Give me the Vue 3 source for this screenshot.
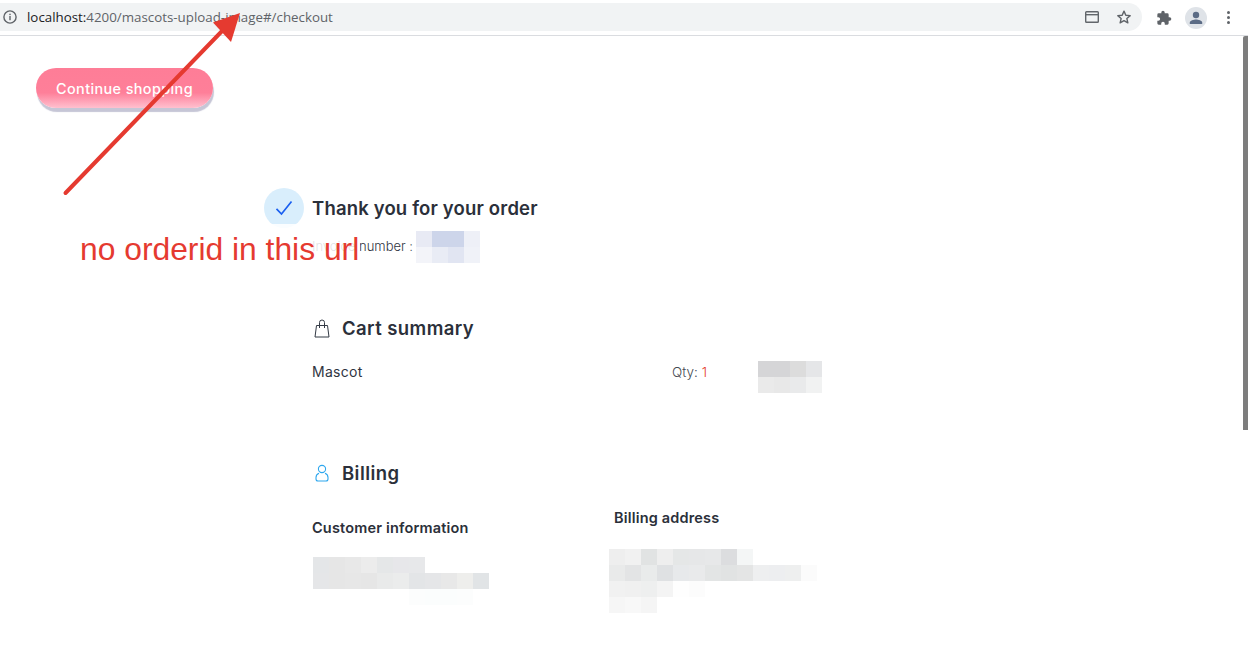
<script setup>
const orderCells = [
  ['#e8eaf4', '#cdd5ea', '#cdd5ea', '#eef0f7'],
  ['#f3f4f9', '#e9ecf5', '#e1e5f2', '#f0f2f8'],
]
const priceCells = [
  ['#d5d5d7', '#d5d5d7', '#dcdcdc', '#e5e6e8'],
  ['#eaeaea', '#e8e8e8', '#e9eaeb', '#f1f2f2'],
]
const customerCells = [
  ['#e4e6e8', '#e6e6e6', '#e8e8e8', '#ececec', '#e5e7e8', '#e7e7ea', '#e7e8ea'],
  ['#e5e6e8', '#e6e6e6', '#e7e7e7', '#e6e6e6', '#e9eaea', '#ebecec', '#e3e5e7', '#e5e6e8', '#e8e8e8', '#eeeeec', '#e1e4e6'],
  ['#fff', '#fff', '#fff', '#fff', '#fff', '#fff', '#fcfdfd', '#fbfdfd', '#fbfdfd', '#fcfdfd'],
]
const addressCells = [
  ['#eeeeee', '#f1f1f1', '#e1e3e3', '#eeeeee', '#e5e7e7', '#e6e7e8', '#e7e8e9', '#dcdddf', '#f4f6f6'],
  ['#e9eaea', '#e3e4e5', '#e9ebeb', '#dfe1e3', '#e7e9eb', '#e9eaeb', '#e3e5e5', '#e1e3e3', '#e4e5e5', '#eeeff0', '#edeef0', '#eeefef', '#fbfbfb'],
  ['#f1f1f1', '#f0f0f0', '#eeefef', '#f4f4f4', '#fefefe', '#fcfcfc'],
  ['#f6f6f6', '#f8f8f8', '#f5f5f5'],
]
</script>

<template>
  <div class="screen">
    <header class="toolbar">
      <div class="omnibox">
        <svg class="info" width="14" height="14" viewBox="0 0 14 14" fill="none">
          <circle cx="7" cy="7" r="6.1" stroke="#5f6368" stroke-width="1.4" />
          <rect x="6.3" y="6" width="1.4" height="4.2" fill="#5f6368" />
          <rect x="6.3" y="3.7" width="1.4" height="1.4" fill="#5f6368" />
        </svg>
        <span class="url"><span class="host">localhost:</span>4200/mascots-upload-image#/checkout</span>
        <span class="spacer"></span>
        <svg class="omni-icon" width="16" height="14" viewBox="0 0 16 14" fill="none">
          <rect x="1.700" y="1.700" width="12.600" height="10.600" rx="0.800" stroke="#62666b" stroke-width="1.400" />
          <rect x="1.700" y="4" width="12.600" height="1.400" fill="#62666b" />
        </svg>
        <svg class="omni-icon star" width="16" height="16" viewBox="0 0 24 24" fill="none">
          <path d="M12 3.200l2.700 6.100 6.600.6-5 4.400 1.500 6.500L12 17.400l-5.800 3.400 1.500-6.500-5-4.400 6.600-.6z" stroke="#5f6368" stroke-width="2.100" stroke-linejoin="round" />
        </svg>
      </div>
      <div class="actions">
        <svg width="16" height="16" viewBox="0 0 24 24">
          <path d="M20.500 11H19V7a2 2 0 0 0-2-2h-4V3.500a2.500 2.500 0 0 0-5 0V5H4a2 2 0 0 0-2 2v3.800h1.500a2.700 2.700 0 0 1 0 5.400H2V20a2 2 0 0 0 2 2h3.800v-1.500a2.700 2.700 0 0 1 5.400 0V22H17a2 2 0 0 0 2-2v-4h1.500a2.500 2.500 0 0 0 0-5z" fill="#5f6368" />
        </svg>
        <span class="avatar">
          <svg width="16" height="16" viewBox="0 0 16 16">
            <circle cx="8" cy="5" r="3.200" fill="#5b6b85" />
            <path d="M1.800 14v-1.600C1.800 10.300 5.800 9.400 8 9.400s6.200.9 6.200 3V14z" fill="#5b6b85" />
          </svg>
        </span>
        <span class="kebab"><i></i><i></i><i></i></span>
      </div>
    </header>

    <div class="viewport">
      <main class="page">
        <button class="continue">Continue shopping</button>

        <section class="thanks">
          <div class="thanks-head">
            <span class="check-circle">
              <svg width="18" height="16" viewBox="0 0 18 16" fill="none">
                <path d="M1.500 8.800l5 5.200L16.500 1.500" stroke="#1a5ff0" stroke-width="1.700" />
              </svg>
            </span>
            <h1 class="thanks-title">Thank you for your order</h1>
          </div>
          <div class="order-line">
            <span class="order-label">Invoice number :</span>
            <div class="pixels order-pixels">
              <div v-for="(row, r) in orderCells" :key="r" class="pixel-row">
                <span v-for="(c, i) in row" :key="i" class="pixel" :style="{ background: c }"></span>
              </div>
            </div>
          </div>
        </section>

        <section class="cart">
          <h2 class="section-title">
            <svg class="section-icon" width="16" height="19" viewBox="0 0 16 19" fill="none">
              <path d="M2.500 6.500h11l1.500 11.500H1z" stroke="#333a45" stroke-width="1" stroke-linejoin="round" />
              <path d="M5.500 9V3.500a2.500 2.500 0 0 1 5 0V9" stroke="#333a45" stroke-width="1" />
            </svg>
            Cart summary
          </h2>
          <div class="cart-row">
            <span class="item-name">Mascot</span>
            <span class="qty">Qty: <b>1</b></span>
            <div class="pixels price-pixels">
              <div v-for="(row, r) in priceCells" :key="r" class="pixel-row">
                <span v-for="(c, i) in row" :key="i" class="pixel" :style="{ background: c }"></span>
              </div>
            </div>
          </div>
        </section>

        <section class="billing">
          <h2 class="section-title">
            <svg class="section-icon" width="16" height="18" viewBox="0 0 16 18" fill="none">
              <circle cx="8" cy="5" r="3.600" stroke="#2ea7ee" stroke-width="1.100" />
              <path d="M5 9.200C3 10 2 11.500 2 13.500V15c0 1.200.8 2 2 2h8c1.200 0 2-.8 2-2v-1.500c0-2-1-3.500-3-4.300" stroke="#2ea7ee" stroke-width="1.100" />
            </svg>
            Billing
          </h2>
          <div class="billing-cols">
            <div class="customer">
              <h3 class="sub-title">Customer information</h3>
              <div class="pixels customer-pixels">
                <div v-for="(row, r) in customerCells" :key="r" class="pixel-row">
                  <span v-for="(c, i) in row" :key="i" class="pixel" :style="{ background: c }"></span>
                </div>
              </div>
            </div>
            <div class="address">
              <h3 class="sub-title">Billing address</h3>
              <div class="pixels address-pixels">
                <div v-for="(row, r) in addressCells" :key="r" class="pixel-row">
                  <span v-for="(c, i) in row" :key="i" class="pixel" :style="{ background: c }"></span>
                </div>
              </div>
            </div>
          </div>
        </section>
      </main>
      <div class="scrollbar"><div class="thumb"></div></div>
    </div>

    <!-- Annotation layer drawn over the screenshot -->
    <div class="note">no orderid in this url</div>
    <svg class="arrow" width="1248" height="650" viewBox="0 0 1248 650" fill="none">
      <path d="M65.500 193L224 29" stroke="#e53a30" stroke-width="4" stroke-linecap="round" />
      <path d="M240 13L213 22.500 231 42z" fill="#e53a30" />
    </svg>
  </div>
</template>

<style scoped>
.screen {
  position: relative;
  width: 1248px;
  height: 650px;
  overflow: hidden;
  background: #fff;
  font-family: Inter, "Open Sans", sans-serif;
  color: #2b303a;
}
.toolbar {
  height: 35px;
  border-bottom: 1px solid #dadce0;
  display: flex;
  align-items: center;
  background: #fff;
}
.omnibox {
  width: 1142px;
  height: 28px;
  margin-top: -1px;
  background: #f1f3f4;
  border-radius: 0 14px 14px 0;
  display: flex;
  align-items: center;
  padding-left: 3px;
  box-sizing: border-box;
}
.info { flex: none; }
.url {
  margin-left: 10px;
  font: 13.330px "Open Sans", sans-serif;
  color: #5f6368;
  white-space: nowrap;
}
.host { color: #202124; }
.spacer { flex: 1; }
.omni-icon { flex: none; margin-right: 10px; }
.star { margin-left: 6px; }
.actions {
  flex: 1;
  display: flex;
  align-items: center;
  padding-left: 14px;
}
.avatar {
  width: 22px;
  height: 22px;
  border-radius: 50%;
  background: #dfe3e8;
  margin-left: 13px;
  display: flex;
  align-items: center;
  justify-content: center;
}
.kebab {
  display: flex;
  flex-direction: column;
  gap: 2px;
  margin-left: 20px;
}
.kebab i {
  width: 3px;
  height: 3px;
  border-radius: 50%;
  background: #5f6368;
}
.viewport {
  display: flex;
  height: 614px;
}
.page {
  flex: 1;
  min-width: 0;
}
.scrollbar {
  width: 5px;
  flex: none;
}
.thumb {
  height: 394px;
  background: #7d7d7d;
  border-top-left-radius: 2px;
}
.continue {
  display: block;
  width: 177px;
  height: 40px;
  margin: 32px 0 0 36px;
  border: 0;
  padding: 0;
  border-radius: 20px;
  background: linear-gradient(#fe7d97 0%, #fe7f99 62%, #ffc0cf 100%);
  box-shadow: 1px 4px 1px #c6c6d6;
  color: #fff;
  font: 500 14.400px Inter, sans-serif;
  letter-spacing: 0.400px;
}
.thanks {
  margin: 80px 0 0 264px;
}
.thanks-head {
  display: flex;
  align-items: center;
  gap: 8px;
}
.check-circle {
  width: 40px;
  height: 40px;
  border-radius: 50%;
  background: #d9eefc;
  display: flex;
  align-items: center;
  justify-content: center;
}
.thanks-title {
  margin: 0;
  font: 600 18.500px Inter, sans-serif;
  letter-spacing: 0.170px;
  color: #2b303a;
}
.order-line {
  display: flex;
  align-items: flex-start;
  margin: 3px 0 0 48px;
}
.order-label {
  width: 104px;
  font: 300 13px/30px Inter, sans-serif;
  color: #30353f;
  white-space: nowrap;
}
.pixels {
  display: flex;
  flex-direction: column;
}
.pixel-row {
  display: flex;
}
.pixel {
  width: 16px;
  height: 16px;
  flex: none;
}
.cart {
  margin: 53px 0 0 312px;
}
.section-title {
  margin: 0;
  display: flex;
  align-items: center;
  font: 600 18.500px/24px Inter, sans-serif;
  letter-spacing: 0.420px;
  color: #2b303a;
}
.section-icon {
  flex: none;
  margin: 0 12px 0 2px;
}
.cart-row {
  position: relative;
  display: flex;
  align-items: flex-start;
  margin-top: 21px;
}
.item-name {
  width: 360px;
  font: 400 14px/22px Inter, sans-serif;
  letter-spacing: 0.300px;
  color: #30353f;
}
.qty {
  width: 86px;
  font: 300 13.500px/22px Inter, sans-serif;
  color: #464a52;
}
.qty b {
  font-weight: 300;
  color: #e5402d;
}
.price-pixels {
  margin-top: 0;
}
.billing {
  margin: 68px 0 0 312px;
}
.billing-cols {
  display: flex;
  align-items: flex-start;
  margin-top: 22px;
}
.customer {
  width: 302px;
}
.customer .sub-title {
  margin-top: 10px;
}
.sub-title {
  margin: 0;
  font: 600 14.500px/22px Inter, sans-serif;
  letter-spacing: 0.180px;
  color: #2b303a;
}
.customer-pixels {
  margin: 18px 0 0 1px;
}
.address-pixels {
  margin: 20px 0 0 -5px;
}
.note {
  position: absolute;
  left: 60px;
  top: 224px;
  width: 300px;
  height: 48px;
  padding-left: 20px;
  box-sizing: border-box;
  background: rgba(255, 255, 255, 0.85);
  font: 31.800px/50px "Liberation Sans", Arial, sans-serif;
  color: #e53a30;
  white-space: nowrap;
}
.arrow {
  position: absolute;
  left: 0;
  top: 0;
  pointer-events: none;
}
</style>

<style>
html, body { margin: 0; overflow: hidden; }
</style>
